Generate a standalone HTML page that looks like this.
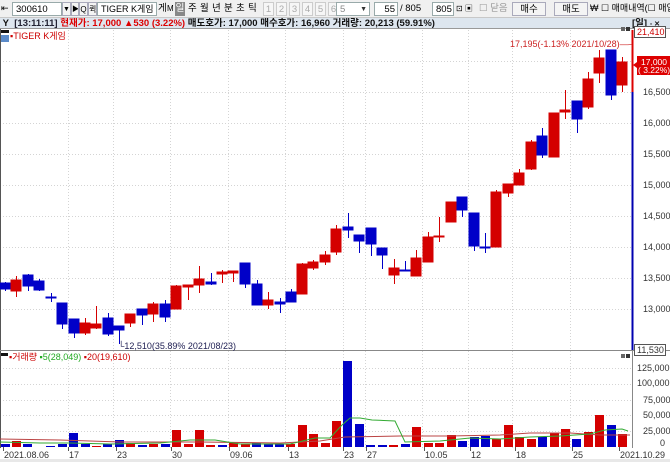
<!DOCTYPE html>
<html><head><meta charset="utf-8"><style>
*{margin:0;padding:0;box-sizing:border-box}
body{width:670px;height:462px;overflow:hidden;background:#fff;font-family:"Liberation Sans","Noto Sans CJK KR",sans-serif;position:relative}
.tb{position:absolute;left:0;top:0;width:670px;height:18px;background:#f0f0f0;border-bottom:1px solid #c8c8c8;font-size:9.5px;overflow:hidden}
.tb div{position:absolute;top:2px;height:14px;line-height:13px;white-space:nowrap;overflow:hidden}
.inp{background:#fff;border:1px solid #9aa;padding-left:3px}
.btn{border:1px solid #aab;background:#f4f4f4;text-align:center}
.gray{color:#aaa;border:1px solid #ccc;background:#f6f6f6;text-align:center;width:11px}
.info{position:absolute;left:0;top:18px;width:670px;height:11px;background:#dde6ef;font-size:9.5px;font-weight:bold;line-height:11px;white-space:nowrap;color:#111;border-bottom:1px solid #999;overflow:hidden}
svg{position:absolute;left:0;top:0}
</style></head><body>
<div class="tb">
<div style="left:1px;font-size:9px">⇤</div>
<div class="inp" style="left:12px;width:50px">300610</div>
<div class="btn" style="left:62px;width:9px;font-size:7px">▼</div>
<div class="btn" style="left:71px;width:8px;font-size:7px">▶</div>
<div class="btn" style="left:79px;width:9px;font-size:8px">Q</div>
<div class="btn" style="left:88px;width:9px;font-size:8px">퀵</div>
<div class="inp" style="left:97px;width:60px;font-size:9px">TIGER K게임</div>
<div style="left:158px">게</div><div style="left:167px;font-size:8px">M</div>
<div style="left:175px;width:10px;background:#888;color:#fff;text-align:center">일</div>
<div style="left:188px">주</div><div style="left:200px">월</div><div style="left:212px">년</div><div style="left:224px">분</div><div style="left:236px">초</div><div style="left:248px">틱</div>
<div class="gray" style="left:263px">1</div><div class="gray" style="left:276px">2</div><div class="gray" style="left:289px">3</div><div class="gray" style="left:302px">4</div><div class="gray" style="left:315px">5</div><div class="gray" style="left:328px">6</div>
<div class="inp" style="left:336px;width:34px;color:#888">5 <span style="float:right;padding-right:2px;font-size:7px;color:#333">▼</span></div>
<div class="inp" style="left:374px;width:24px;text-align:right;padding-right:2px">55</div>
<div style="left:400px">/ 805</div>
<div class="inp" style="left:432px;width:22px">805</div>
<div style="left:456px;font-size:8px">⊡ ▣</div>
<div style="left:479px;color:#999">☐ 닫음</div>
<div class="btn" style="left:512px;width:34px">매수</div>
<div class="btn" style="left:554px;width:34px">매도</div>
<div style="left:590px;font-size:9px">₩ ☐ 매매내역(☐ 매입</div>
</div>
<div class="info">&nbsp;Y&nbsp; <span style="color:#223">[13:11:11]</span> <span style="color:#d00">현재가: 17,000 ▲530 (3.22%)</span> 매도호가: 17,000 매수호가: 16,960 거래량: 20,213 (59.91%)<span style="position:absolute;left:632px;top:0">[일] <span style="font-size:7px">▫ ✕</span></span></div>
<svg width="670" height="462" viewBox="0 0 670 462" font-family="Liberation Sans, Noto Sans CJK KR, sans-serif">
<g stroke="#d4d4d4" stroke-dasharray="1,2" stroke-width="1">
<line x1="0" y1="61.5" x2="632" y2="61.5"/><line x1="0" y1="92.5" x2="632" y2="92.5"/><line x1="0" y1="123.5" x2="632" y2="123.5"/><line x1="0" y1="154.5" x2="632" y2="154.5"/><line x1="0" y1="185.5" x2="632" y2="185.5"/><line x1="0" y1="216.5" x2="632" y2="216.5"/><line x1="0" y1="247.5" x2="632" y2="247.5"/><line x1="0" y1="278.5" x2="632" y2="278.5"/><line x1="0" y1="309.5" x2="632" y2="309.5"/>
<line x1="0" y1="368.5" x2="632" y2="368.5"/><line x1="0" y1="384.5" x2="632" y2="384.5"/><line x1="0" y1="400.5" x2="632" y2="400.5"/><line x1="0" y1="415.5" x2="632" y2="415.5"/><line x1="0" y1="431.5" x2="632" y2="431.5"/>
<line x1="68.5" y1="30" x2="68.5" y2="448"/><line x1="113.5" y1="30" x2="113.5" y2="448"/><line x1="170.5" y1="30" x2="170.5" y2="448"/><line x1="228.5" y1="30" x2="228.5" y2="448"/><line x1="285.5" y1="30" x2="285.5" y2="448"/><line x1="343.5" y1="30" x2="343.5" y2="448"/><line x1="365.5" y1="30" x2="365.5" y2="448"/><line x1="422.5" y1="30" x2="422.5" y2="448"/><line x1="468.5" y1="30" x2="468.5" y2="448"/><line x1="512.5" y1="30" x2="512.5" y2="448"/><line x1="570.5" y1="30" x2="570.5" y2="448"/>
</g>
<line x1="0.5" y1="29" x2="0.5" y2="448" stroke="#555"/>
<line x1="0" y1="350.5" x2="670" y2="350.5" stroke="#888"/>
<line x1="632.5" y1="350" x2="632.5" y2="448" stroke="#888"/>
<line x1="632.5" y1="30" x2="632.5" y2="92" stroke="#d00" stroke-width="2"/>
<line x1="632.5" y1="92" x2="632.5" y2="350" stroke="#0000b0" stroke-width="2"/>
<rect x="1" y="30" width="8" height="3" fill="#111"/><rect x="1" y="35" width="8" height="7" fill="#5a8ac8"/>
<text x="10" y="39" font-size="9" fill="#c00">▪TIGER K게임</text>
<g font-size="9" fill="#333">
<text x="643" y="95">16,500</text><text x="643" y="126">16,000</text><text x="643" y="157">15,500</text><text x="643" y="188">15,000</text><text x="643" y="219">14,500</text><text x="643" y="250">14,000</text><text x="643" y="281">13,500</text><text x="643" y="312">13,000</text>
<text x="637" y="371">125,000</text><text x="637" y="386">100,000</text><text x="643" y="403">75,000</text><text x="643" y="418">50,000</text><text x="643" y="434">25,000</text><text x="660" y="446">0</text>
</g>
<rect x="634.5" y="26.5" width="31" height="11" fill="#fff" stroke="#555"/><text x="637" y="35" font-size="9" fill="#c00">21,410</text>
<rect x="637" y="56" width="33" height="19" fill="#d00"/><text x="641" y="65" font-size="8.5" fill="#fff">17,000</text><text x="638" y="73" font-size="8.5" fill="#fff">( 3.22%)</text>
<path d="M633 65 l4 -3 v6z" fill="#d00"/>
<rect x="634.5" y="344.5" width="31" height="11" fill="#fff" stroke="#555"/><text x="637" y="353" font-size="9" fill="#333">11,530</text>
<rect x="621" y="27" width="4" height="4" fill="#666"/><rect x="626" y="27" width="4" height="4" fill="#333"/>
<rect x="621" y="354" width="4" height="4" fill="#666"/><rect x="626" y="354" width="4" height="4" fill="#333"/>
<text x="510" y="47" font-size="9" fill="#c22">17,195(-1.13% 2021/10/28)—┐</text>
<text x="118" y="349" font-size="9" fill="#225">└12,510(35.89% 2021/08/23)</text>
<rect x="1" y="353" width="7" height="3" fill="#111"/>
<text x="9" y="360" font-size="9"><tspan fill="#c00">▪거래량 </tspan><tspan fill="#2a2">▪5(28,049) </tspan><tspan fill="#c00">▪20(19,610)</tspan></text>
<g stroke-width="1">
<g stroke="#0000c8" fill="#0000c8">
<line x1="5.5" y1="282" x2="5.5" y2="291"/><rect x="0" y="283" width="10" height="6"/>
<line x1="28.5" y1="274" x2="28.5" y2="291"/><rect x="23" y="275" width="10" height="11"/>
<line x1="39.5" y1="279" x2="39.5" y2="291"/><rect x="34" y="281" width="10" height="9"/>
<line x1="51.5" y1="293" x2="51.5" y2="302"/><rect x="46" y="297" width="10" height="1"/>
<line x1="62.5" y1="303" x2="62.5" y2="329"/><rect x="57" y="303" width="10" height="21"/>
<line x1="74.5" y1="319" x2="74.5" y2="338"/><rect x="69" y="319" width="10" height="14"/>
<line x1="108.5" y1="313" x2="108.5" y2="336"/><rect x="103" y="318" width="10" height="16"/>
<line x1="119.5" y1="326" x2="119.5" y2="344"/><rect x="114" y="326" width="10" height="4"/>
<line x1="142.5" y1="309" x2="142.5" y2="325"/><rect x="137" y="309" width="10" height="6"/>
<line x1="165.5" y1="300" x2="165.5" y2="322"/><rect x="160" y="304" width="10" height="13"/>
<line x1="211.5" y1="273" x2="211.5" y2="285"/><rect x="206" y="282" width="10" height="2"/>
<line x1="245.5" y1="263" x2="245.5" y2="288"/><rect x="240" y="263" width="10" height="21"/>
<line x1="257.5" y1="280" x2="257.5" y2="305"/><rect x="252" y="284" width="10" height="21"/>
<line x1="280.5" y1="298" x2="280.5" y2="313"/><rect x="275" y="302" width="10" height="2"/>
<line x1="291.5" y1="289" x2="291.5" y2="302"/><rect x="286" y="292" width="10" height="10"/>
<line x1="348.5" y1="213" x2="348.5" y2="238"/><rect x="343" y="227" width="10" height="3"/>
<line x1="359.5" y1="235" x2="359.5" y2="253"/><rect x="354" y="235" width="10" height="6"/>
<line x1="371.5" y1="228" x2="371.5" y2="256"/><rect x="366" y="228" width="10" height="16"/>
<line x1="382.5" y1="248" x2="382.5" y2="269"/><rect x="377" y="248" width="10" height="7"/>
<line x1="405.5" y1="261" x2="405.5" y2="271"/><rect x="400" y="270" width="10" height="1"/>
<line x1="462.5" y1="197" x2="462.5" y2="217"/><rect x="457" y="197" width="10" height="13"/>
<line x1="474.5" y1="213" x2="474.5" y2="251"/><rect x="469" y="213" width="10" height="33"/>
<line x1="485.5" y1="233" x2="485.5" y2="253"/><rect x="480" y="247" width="10" height="1"/>
<line x1="542.5" y1="128" x2="542.5" y2="158"/><rect x="537" y="136" width="10" height="19"/>
<line x1="577.5" y1="101" x2="577.5" y2="133"/><rect x="572" y="101" width="10" height="18"/>
<line x1="611.5" y1="50" x2="611.5" y2="100"/><rect x="606" y="50" width="10" height="45"/>
</g>
<g stroke="#d40000" fill="#d40000">
<line x1="16.5" y1="276" x2="16.5" y2="297"/><rect x="11" y="280" width="10" height="11"/>
<line x1="85.5" y1="318" x2="85.5" y2="335"/><rect x="80" y="323" width="10" height="10"/>
<line x1="96.5" y1="306" x2="96.5" y2="329"/><rect x="91" y="324" width="10" height="4"/>
<line x1="130.5" y1="314" x2="130.5" y2="327"/><rect x="125" y="314" width="10" height="9"/>
<line x1="153.5" y1="302" x2="153.5" y2="322"/><rect x="148" y="304" width="10" height="10"/>
<line x1="176.5" y1="285" x2="176.5" y2="309"/><rect x="171" y="286" width="10" height="23"/>
<line x1="188.5" y1="285" x2="188.5" y2="300"/><rect x="183" y="285" width="10" height="2"/>
<line x1="199.5" y1="266" x2="199.5" y2="293"/><rect x="194" y="279" width="10" height="6"/>
<line x1="222.5" y1="270" x2="222.5" y2="283"/><rect x="217" y="272" width="10" height="2"/>
<line x1="233.5" y1="271" x2="233.5" y2="282"/><rect x="228" y="271" width="10" height="2"/>
<line x1="268.5" y1="292" x2="268.5" y2="309"/><rect x="263" y="300" width="10" height="5"/>
<line x1="302.5" y1="263" x2="302.5" y2="294"/><rect x="297" y="264" width="10" height="30"/>
<line x1="313.5" y1="260" x2="313.5" y2="270"/><rect x="308" y="262" width="10" height="6"/>
<line x1="325.5" y1="251" x2="325.5" y2="265"/><rect x="320" y="255" width="10" height="7"/>
<line x1="336.5" y1="225" x2="336.5" y2="255"/><rect x="331" y="229" width="10" height="23"/>
<line x1="394.5" y1="259" x2="394.5" y2="284"/><rect x="389" y="268" width="10" height="7"/>
<line x1="416.5" y1="250" x2="416.5" y2="276"/><rect x="411" y="258" width="10" height="18"/>
<line x1="428.5" y1="232" x2="428.5" y2="262"/><rect x="423" y="237" width="10" height="25"/>
<line x1="439.5" y1="217" x2="439.5" y2="242"/><rect x="434" y="236" width="10" height="1"/>
<line x1="451.5" y1="202" x2="451.5" y2="222"/><rect x="446" y="202" width="10" height="20"/>
<line x1="496.5" y1="190" x2="496.5" y2="247"/><rect x="491" y="192" width="10" height="55"/>
<line x1="508.5" y1="184" x2="508.5" y2="197"/><rect x="503" y="184" width="10" height="9"/>
<line x1="519.5" y1="169" x2="519.5" y2="185"/><rect x="514" y="173" width="10" height="12"/>
<line x1="531.5" y1="140" x2="531.5" y2="170"/><rect x="526" y="142" width="10" height="27"/>
<line x1="554.5" y1="113" x2="554.5" y2="157"/><rect x="549" y="113" width="10" height="44"/>
<line x1="565.5" y1="90" x2="565.5" y2="119"/><rect x="560" y="110" width="10" height="2"/>
<line x1="588.5" y1="72" x2="588.5" y2="109"/><rect x="583" y="79" width="10" height="28"/>
<line x1="599.5" y1="50" x2="599.5" y2="83"/><rect x="594" y="58" width="10" height="15"/>
<line x1="622.5" y1="57" x2="622.5" y2="92"/><rect x="617" y="62" width="10" height="23"/>
</g>
</g>
<g fill="#0000c8">
<rect x="1" y="444" width="9" height="3"/><rect x="23" y="444" width="9" height="3"/><rect x="46" y="446" width="9" height="1"/><rect x="58" y="444" width="9" height="3"/><rect x="69" y="433" width="9" height="14"/><rect x="81" y="444" width="9" height="3"/><rect x="103" y="444" width="9" height="3"/><rect x="115" y="440" width="9" height="7"/><rect x="138" y="445" width="9" height="2"/><rect x="161" y="444" width="9" height="3"/><rect x="218" y="445" width="9" height="2"/><rect x="252" y="443" width="9" height="4"/><rect x="264" y="444" width="9" height="3"/><rect x="275" y="444" width="9" height="3"/><rect x="343" y="361" width="9" height="86"/><rect x="355" y="424" width="9" height="23"/><rect x="366" y="445" width="9" height="2"/><rect x="378" y="445" width="9" height="2"/><rect x="401" y="444" width="9" height="3"/><rect x="458" y="441" width="9" height="6"/><rect x="470" y="437" width="9" height="10"/><rect x="481" y="436" width="9" height="11"/><rect x="538" y="437" width="9" height="10"/><rect x="572" y="439" width="9" height="8"/><rect x="607" y="425" width="9" height="22"/>
</g>
<g fill="#d40000">
<rect x="12" y="441" width="9" height="6"/><rect x="92" y="446" width="9" height="1"/><rect x="126" y="443" width="9" height="4"/><rect x="149" y="444" width="9" height="3"/><rect x="172" y="430" width="9" height="17"/><rect x="184" y="444" width="9" height="3"/><rect x="195" y="430" width="9" height="17"/><rect x="206" y="445" width="9" height="2"/><rect x="229" y="443" width="9" height="4"/><rect x="241" y="444" width="9" height="3"/><rect x="286" y="444" width="9" height="3"/><rect x="298" y="425" width="9" height="22"/><rect x="309" y="434" width="9" height="13"/><rect x="321" y="443" width="9" height="4"/><rect x="332" y="421" width="9" height="26"/><rect x="389" y="445" width="9" height="2"/><rect x="412" y="427" width="9" height="20"/><rect x="424" y="443" width="9" height="4"/><rect x="435" y="443" width="9" height="4"/><rect x="447" y="435" width="9" height="12"/><rect x="492" y="439" width="9" height="8"/><rect x="504" y="425" width="9" height="22"/><rect x="515" y="437" width="9" height="10"/><rect x="527" y="439" width="9" height="8"/><rect x="550" y="433" width="9" height="14"/><rect x="561" y="429" width="9" height="18"/><rect x="584" y="432" width="9" height="15"/><rect x="595" y="415" width="9" height="32"/><rect x="618" y="434" width="9" height="13"/>
</g>
<polyline fill="none" stroke="#b44" stroke-width="1" points="0,439 60,440 120,442 200,442 280,443 320,441 345,437 400,436 450,436 500,435 530,433 570,433 600,435 630,435"/>
<polyline fill="none" stroke="#3a3" stroke-width="1" points="0,442 40,443 70,443 110,444 160,443 190,440 215,440 240,444 290,444 315,438 330,438 342,425 350,418 360,418 372,420 395,421 405,442 440,441 470,438 500,439 530,437 560,436 590,434 605,430 622,429 628,431"/>
<g stroke="#555"><line x1="3.5" y1="447" x2="3.5" y2="451"/><line x1="68.5" y1="447" x2="68.5" y2="451"/><line x1="116.5" y1="447" x2="116.5" y2="451"/><line x1="171.5" y1="447" x2="171.5" y2="451"/><line x1="229.5" y1="447" x2="229.5" y2="451"/><line x1="288.5" y1="447" x2="288.5" y2="451"/><line x1="343.5" y1="447" x2="343.5" y2="451"/><line x1="366.5" y1="447" x2="366.5" y2="451"/><line x1="424.5" y1="447" x2="424.5" y2="451"/><line x1="470.5" y1="447" x2="470.5" y2="451"/><line x1="515.5" y1="447" x2="515.5" y2="451"/><line x1="572.5" y1="447" x2="572.5" y2="451"/><line x1="619.5" y1="447" x2="619.5" y2="451"/></g>
<g font-size="9" fill="#333">
<text x="4" y="458">2021.08.06</text><text x="69" y="458">17</text><text x="117" y="458">23</text><text x="172" y="458">30</text><text x="230" y="458">09.06</text><text x="289" y="458">13</text><text x="344" y="458">23</text><text x="367" y="458">27</text><text x="425" y="458">10.05</text><text x="471" y="458">12</text><text x="516" y="458">18</text><text x="573" y="458">25</text><text x="620" y="458">2021.10.29</text>
</g>
<rect x="0" y="459" width="670" height="3" fill="#e8e8e8"/>
</svg>
</body></html>
